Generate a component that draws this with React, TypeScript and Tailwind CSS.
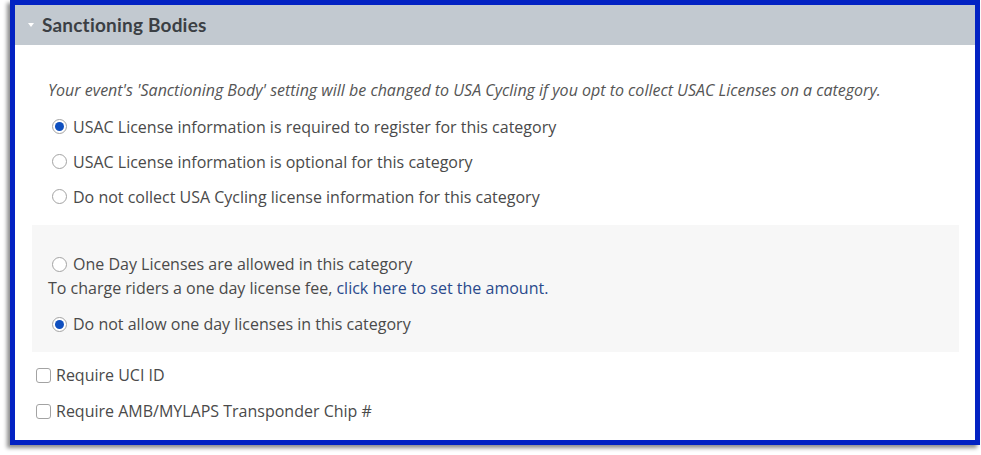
const rowText = "text-[16px] text-[#4a4a4a] leading-[24px]";

function Radio({ checked }: { checked?: boolean }) {
  return (
    <span className="flex h-[15px] w-[15px] shrink-0 items-center justify-center rounded-full border border-[#a3a3a3] bg-white">
      {checked && <span className="h-[9px] w-[9px] rounded-full bg-[#0f4fbf]" />}
    </span>
  );
}

function Checkbox() {
  return <span className="h-[15px] w-[15px] shrink-0 rounded-[3px] border border-[#a3a3a3] bg-white" />;
}

function RadioRow({ label, checked, className }: { label: string; checked?: boolean; className: string }) {
  return (
    <div className={`flex items-center gap-[6px] pl-[20px] ${className}`}>
      <Radio checked={checked} />
      <span className={rowText}>{label}</span>
    </div>
  );
}

export default function App() {
  return (
    <div className="h-[455px] w-[981px] bg-white font-['Open_Sans',sans-serif]">
      <div className="ml-[10px] h-[445px] w-[970px] border-[5px] border-[#0322c3] bg-white shadow-[-3px_3px_4px_rgba(0,0,0,0.45)]">
        {/* Header */}
        <div className="flex h-[40px] items-center bg-[#c2c9d0] pl-[13px]">
          <span className="h-0 w-0 border-x-[3.5px] border-t-[4px] border-x-transparent border-t-white" />
          <span className="ml-[8px] font-['Lato',sans-serif] text-[19px] font-bold tracking-[0.2px] text-[#3b3f44]">
            Sanctioning Bodies
          </span>
        </div>

        {/* Body */}
        <div className="pl-[17px] pr-[16px] pt-[33px]">
          <p className="pl-[16px] text-[16px] italic leading-[24px] text-[#555]">
            Your event's 'Sanctioning Body' setting will be changed to USA Cycling if you opt to collect USAC Licenses on a category.
          </p>

          <div className="mt-[7px]">
            <RadioRow className="h-[35px]" checked label="USAC License information is required to register for this category" />
            <RadioRow className="h-[35px]" label="USAC License information is optional for this category" />
            <RadioRow className="h-[35px]" label="Do not collect USA Cycling license information for this category" />
          </div>

          <div className="mt-[11px] h-[127px] bg-[#f7f7f7] pt-[27px]">
            <RadioRow className="h-[24px]" label="One Day Licenses are allowed in this category" />
            <p className={`h-[24px] pl-[16px] ${rowText}`}>
              To charge riders a one day license fee,{" "}
              <a className="text-[#2a4a8c]">click here to set the amount.</a>
            </p>
            <RadioRow className="mt-[12px] h-[24px]" checked label="Do not allow one day licenses in this category" />
          </div>

          <div className="mt-[11px] flex h-[24px] items-center gap-[5px] pl-[4px]">
            <Checkbox />
            <span className={rowText}>Require UCI ID</span>
          </div>
          <div className="mt-[12px] flex h-[24px] items-center gap-[5px] pl-[4px]">
            <Checkbox />
            <span className={rowText}>Require AMB/MYLAPS Transponder Chip #</span>
          </div>
        </div>
      </div>
    </div>
  );
}
